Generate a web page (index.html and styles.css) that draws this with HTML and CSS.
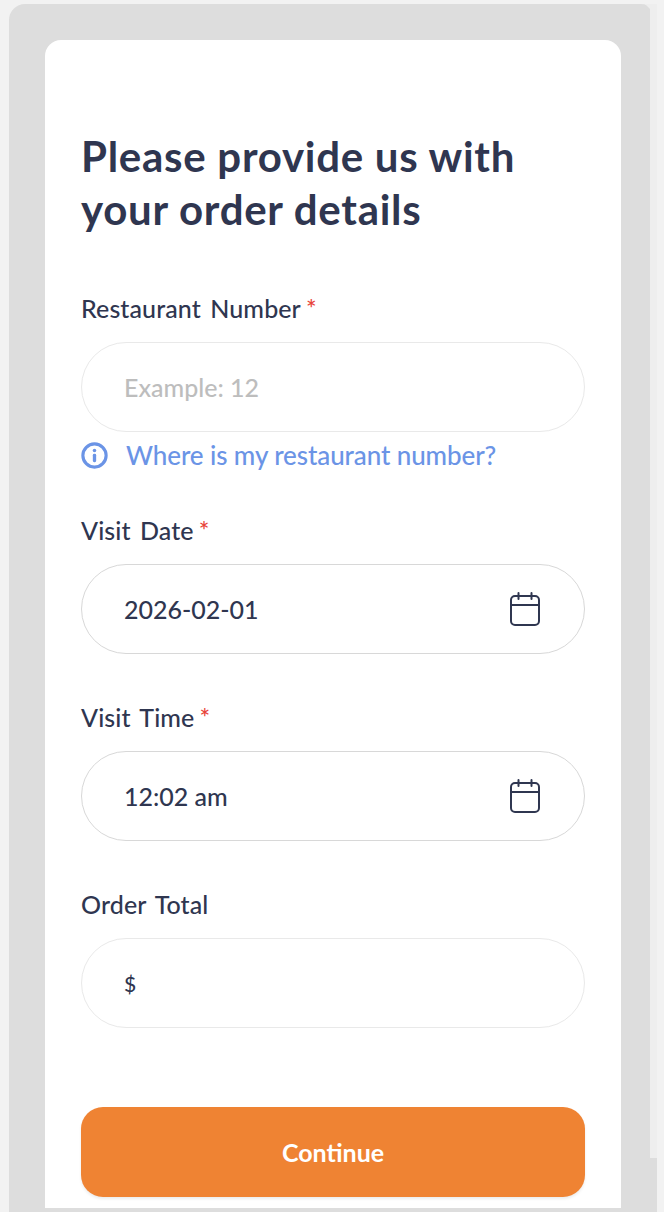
FILE: index.html
```html
<!DOCTYPE html>
<html>
<head>
<meta charset="utf-8">
<title>Order details</title>
<link rel="stylesheet" href="styles.css">
</head>
<body>
<div class="panel">
	<div class="scrollbar"></div>
	<main class="card">
		<h1 class="title">Please provide us with your order details</h1>

		<div class="field">
			<label class="label">Restaurant Number<span class="req">*</span></label>
			<div class="input input-light"><span class="placeholder">Example: 12</span></div>
			<a class="help">
				<svg class="help-icon" viewBox="0 0 26 26" fill="none">
					<circle cx="13" cy="13" r="11.2" stroke="#6b94e6" stroke-width="3"/>
					<circle cx="13" cy="8.2" r="1.7" fill="#6b94e6"/>
					<rect x="11.4" y="11.4" width="3.2" height="8" rx="1.4" fill="#6b94e6"/>
				</svg>
				Where is my restaurant number?
			</a>
		</div>

		<div class="field field-date">
			<label class="label">Visit Date<span class="req">*</span></label>
			<div class="input">
				<span>2026-02-01</span>
				<svg class="cal" viewBox="0 0 30 34" fill="none" stroke="#2f3650" stroke-width="2" stroke-linecap="round">
					<rect x="1" y="4" width="28" height="29" rx="4"/>
					<path d="M1 13H29M8.500 1V7M21.500 1V7"/>
				</svg>
			</div>
		</div>

		<div class="field field-time">
			<label class="label">Visit Time<span class="req">*</span></label>
			<div class="input">
				<span>12:02 am</span>
				<svg class="cal" viewBox="0 0 30 34" fill="none" stroke="#2f3650" stroke-width="2" stroke-linecap="round">
					<rect x="1" y="4" width="28" height="29" rx="4"/>
					<path d="M1 13H29M8.500 1V7M21.500 1V7"/>
				</svg>
			</div>
		</div>

		<div class="field field-time">
			<label class="label">Order Total</label>
			<div class="input input-light"><span class="currency">$</span></div>
		</div>

		<button class="btn" type="button">Continue</button>
	</main>
</div>
</body>
</html>
```

FILE: styles.css
```css
html,
body {
	height: 100%;
}
body {
	margin: 0;
	background: #f2f2f2;
	font-family: 'Lato', 'Noto Sans', sans-serif;
	color: #2f3650;
	overflow: hidden;
}
.panel {
	position: relative;
	height: 1204px;
	margin: 4px 7px 0 9px;
	padding: 36px 36px 0;
	background: #ddd;
	border-radius: 16px;
}
.scrollbar {
	position: absolute;
	top: 0;
	right: 0;
	width: 7px;
	height: 1154px;
	background: #eee;
}
.scrollbar:before {
	content: "";
	position: absolute;
	top: 0;
	left: -5px;
	width: 5px;
	height: 5px;
	background: #eee;
	clip-path: polygon(0 0, 100% 0, 100% 100%);
}
.card {
	width: 504px;
	height: 1132px;
	padding: 36px 36px 0;
	background: #fff;
	border-radius: 16px 16px 0 0;
}
.title {
	margin: 54px 0 57px;
	width: 480px;
	font-size: 42px;
	line-height: 53px;
	font-weight: 700;
	letter-spacing: .73px;
}
.label {
	display: block;
	font-size: 25px;
	line-height: 30px;
	font-weight: 500;
	letter-spacing: .1px;
	word-spacing: 3px;
}
.req {
	color: #e8443a;
	margin-left: 5px;
}
.input {
	display: flex;
	justify-content: space-between;
	align-items: center;
	box-sizing: border-box;
	height: 90px;
	margin-top: 19px;
	padding: 0 44px 0 42px;
	border: 1px solid #d8d8d8;
	border-radius: 45px;
	font-size: 25px;
	font-weight: 500;
}
.input-light {
	border-color: #e9e9e9;
}
.placeholder {
	color: #bdbdbd;
}
.currency {
	font-size: 21px;
}
.help {
	display: flex;
	align-items: center;
	gap: 18px;
	margin-top: 8px;
	height: 30px;
	color: #6b94e6;
	font-size: 26px;
	font-weight: 500;
	letter-spacing: -.1px;
}
.help-icon {
	width: 27px;
	height: 27px;
}
.field-date .label {
	margin-top: 45px;
}
.field-time .label {
	margin-top: 48px;
}
.cal {
	width: 30px;
	height: 34px;
}
.btn {
	display: block;
	width: 100%;
	height: 90px;
	margin-top: 79px;
	border: 0;
	border-radius: 22px;
	background: #ef8333;
	box-shadow: 0 2px 3px rgba(0,0,0,.08);
	color: #fff;
	font-family: inherit;
	font-size: 25px;
	font-weight: 700;
}
```
